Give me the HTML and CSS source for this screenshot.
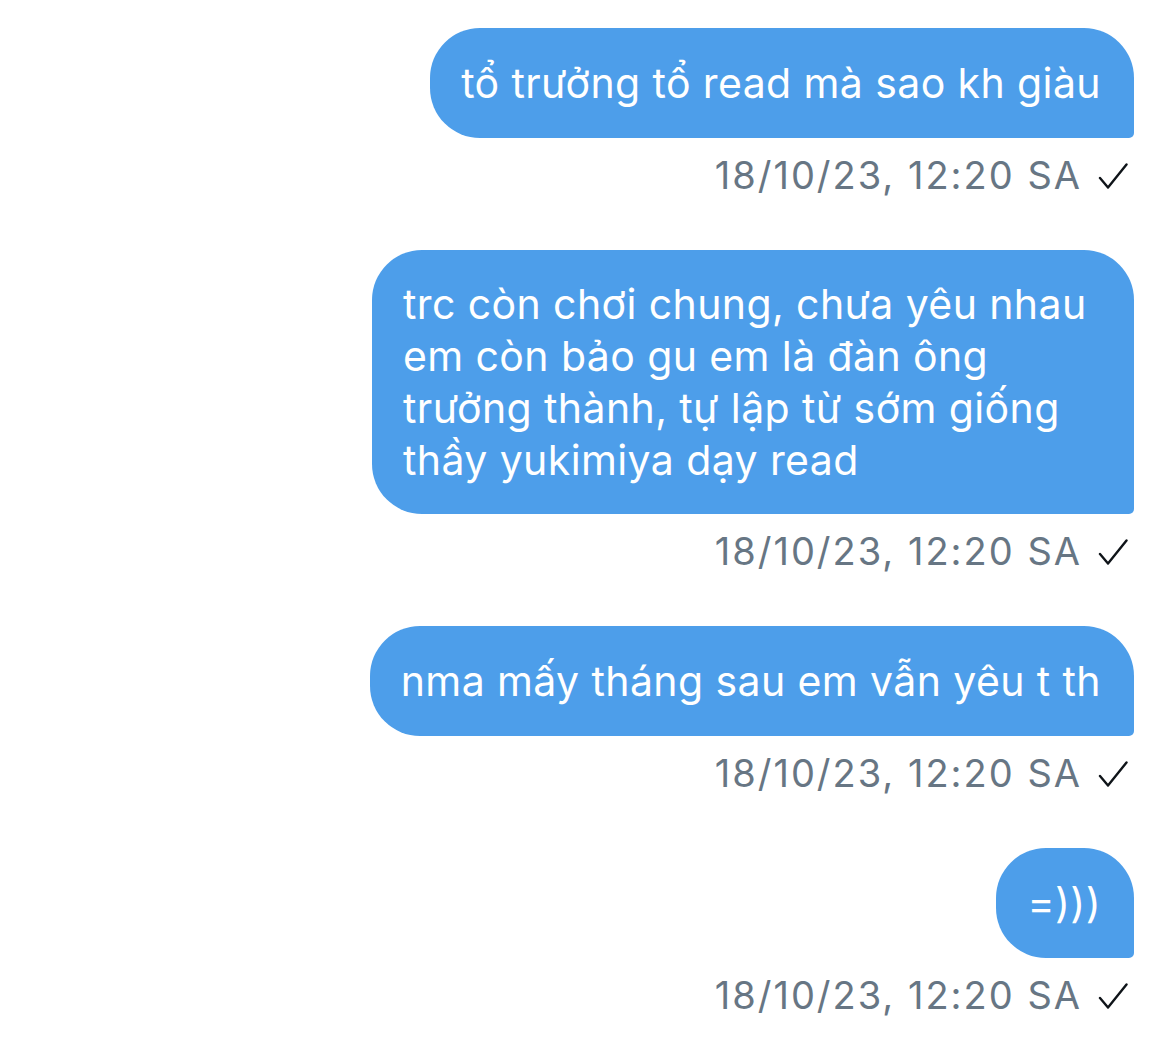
FILE: index.html
```html
<!DOCTYPE html>
<html lang="vi">
<head>
<meta charset="utf-8">
<title>Messages</title>
<link rel="stylesheet" href="styles.css">
</head>
<body>
<div class="thread">
  <div class="msg">
    <div class="bubble">tổ trưởng tổ read mà sao kh giàu</div>
    <div class="meta"><span class="time">18/10/23, 12:20 SA</span><svg class="check" viewBox="0 0 30 28" width="30" height="28"><path d="M2 16 L10 25.5 L28.5 2.5" fill="none" stroke="#0f1419" stroke-width="2.4" stroke-linecap="round" stroke-linejoin="round"/></svg></div>
  </div>
  <div class="msg">
    <div class="bubble wide">trc còn chơi chung, chưa yêu nhau<br>em còn bảo gu em là đàn ông<br>trưởng thành, tự lập từ sớm giống<br>thầy yukimiya dạy read</div>
    <div class="meta"><span class="time">18/10/23, 12:20 SA</span><svg class="check" viewBox="0 0 30 28" width="30" height="28"><path d="M2 16 L10 25.5 L28.5 2.5" fill="none" stroke="#0f1419" stroke-width="2.4" stroke-linecap="round" stroke-linejoin="round"/></svg></div>
  </div>
  <div class="msg">
    <div class="bubble">nma mấy tháng sau em vẫn yêu t th</div>
    <div class="meta"><span class="time">18/10/23, 12:20 SA</span><svg class="check" viewBox="0 0 30 28" width="30" height="28"><path d="M2 16 L10 25.5 L28.5 2.5" fill="none" stroke="#0f1419" stroke-width="2.4" stroke-linecap="round" stroke-linejoin="round"/></svg></div>
  </div>
  <div class="msg">
    <div class="bubble">=)))</div>
    <div class="meta"><span class="time">18/10/23, 12:20 SA</span><svg class="check" viewBox="0 0 30 28" width="30" height="28"><path d="M2 16 L10 25.5 L28.5 2.5" fill="none" stroke="#0f1419" stroke-width="2.4" stroke-linecap="round" stroke-linejoin="round"/></svg></div>
  </div>
</div>
</body>
</html>
```
FILE: styles.css
```css
html, body {
  margin: 0;
  padding: 0;
  background: #ffffff;
}
body {
  font-family: Inter, "Noto Sans", "Liberation Sans", sans-serif;
}
.thread {
  display: flex;
  flex-direction: column;
  align-items: flex-end;
  padding: 28px 36px 0 0;
  gap: 52px;
}
.msg {
  display: flex;
  flex-direction: column;
  align-items: flex-end;
}
.bubble {
  background: #4d9eea;
  color: #ffffff;
  font-size: 41px;
  line-height: 52px;
  letter-spacing: 0.4px;
  padding: 29px 33px 29px 31px;
  border-radius: 50px 50px 5px 50px;
  white-space: nowrap;
}
.bubble.wide {
  width: 762px;
  box-sizing: border-box;
  padding-top: 28px;
  padding-bottom: 28px;
}
.meta {
  display: flex;
  align-items: center;
  margin-top: 14px;
  height: 46px;
  gap: 18px;
  padding-right: 6px;
}
.time {
  color: #677684;
  font-size: 38px;
  line-height: 46px;
  letter-spacing: 2px;
  margin-right: -2px;
}
.check {
  display: block;
  margin-top: 2px;
}
```
